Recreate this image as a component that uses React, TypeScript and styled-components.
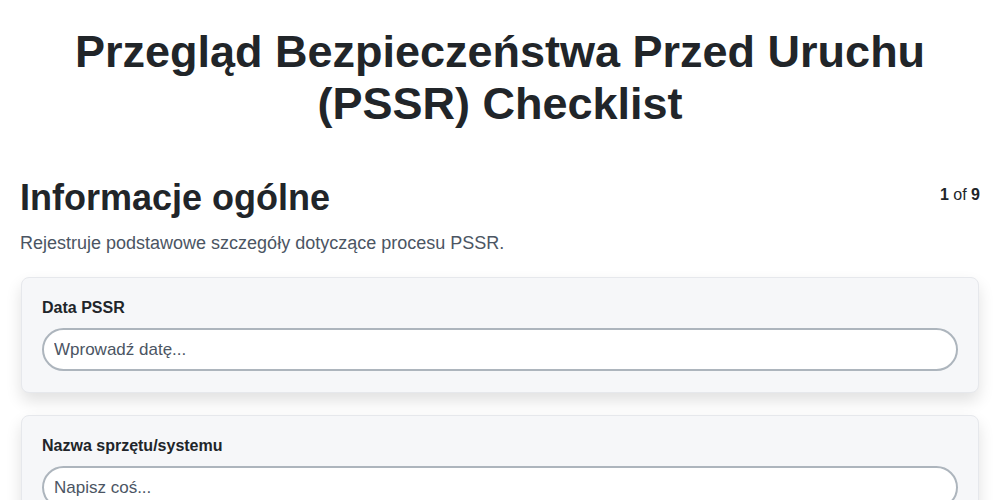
import React from 'react';
import styled, { createGlobalStyle } from 'styled-components';

const fields = [
  { label: 'Data PSSR', placeholder: 'Wprowadź datę...' },
  { label: 'Nazwa sprzętu/systemu', placeholder: 'Napisz coś...' },
];

function App() {
  return (
    <>
      <GlobalStyle />
      <PageStyled>
        <TitleStyled>Przegląd Bezpieczeństwa Przed Uruchu (PSSR) Checklist</TitleStyled>
        <SectionHeader>
          <SectionTitle>Informacje ogólne</SectionTitle>
          <StepCounter>
            <b>1</b> of <b>9</b>
          </StepCounter>
        </SectionHeader>
        <SectionDescription>Rejestruje podstawowe szczegóły dotyczące procesu PSSR.</SectionDescription>
        <CardList>
          {fields.map((f) => (
            <CardStyled key={f.label}>
              <LabelStyled>{f.label}</LabelStyled>
              <InputStyled placeholder={f.placeholder} />
            </CardStyled>
          ))}
        </CardList>
      </PageStyled>
    </>
  );
}

const GlobalStyle = createGlobalStyle`
  body {
    margin: 0;
    background: #ffffff;
    font-family: "Liberation Sans", Arial, sans-serif;
    color: #212529;
  }
`;

const PageStyled = styled.div`
  padding: 0 20px;
`;

const TitleStyled = styled.h1`
  margin: 0;
  padding: 26px 40px 0;
  font-size: 45px;
  line-height: 52px;
  font-weight: 700;
  text-align: center;
  color: #212529;
`;

const SectionHeader = styled.div`
  display: flex;
  justify-content: space-between;
  align-items: flex-start;
  margin-top: 46px;
`;

const SectionTitle = styled.h2`
  margin: 0;
  font-size: 36px;
  line-height: 44px;
  font-weight: 700;
  color: #212529;
`;

const StepCounter = styled.div`
  font-size: 16px;
  line-height: 22px;
  padding-top: 8px;
  color: #212529;
`;

const SectionDescription = styled.p`
  margin: 10px 0 0;
  font-size: 18px;
  line-height: 27px;
  color: #4b5563;
`;

const CardList = styled.div`
  display: flex;
  flex-direction: column;
  gap: 22px;
  margin-top: 20px;
`;

const CardStyled = styled.div`
  background: #f6f7f9;
  border: 1px solid #e6e8ec;
  border-radius: 8px;
  padding: 20px 20px 21px;
  box-shadow: 0 8px 16px rgba(0, 0, 0, 0.12);
  margin: 0 1px;
`;

const LabelStyled = styled.label`
  display: block;
  font-size: 16px;
  line-height: 20px;
  font-weight: 700;
  color: #212529;
  margin-bottom: 10px;
`;

const InputStyled = styled.input`
  box-sizing: border-box;
  display: block;
  width: 100%;
  height: 43px;
  border: 2px solid #adb5bd;
  border-radius: 22px;
  background: #ffffff;
  padding: 0 10px;
  font-family: "Liberation Sans", Arial, sans-serif;
  font-size: 17px;
  color: #212529;
  outline: none;

  &::placeholder {
    color: #4b5563;
    opacity: 1;
  }
`;

export default App;
